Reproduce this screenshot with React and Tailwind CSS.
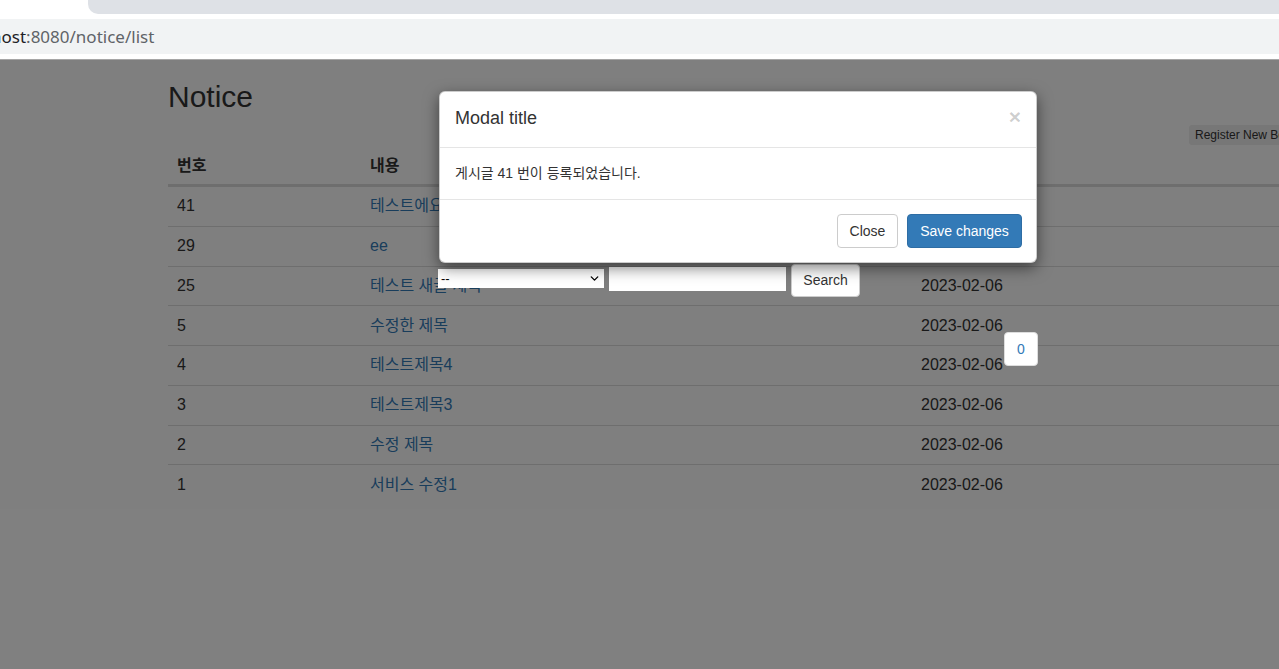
import { ChevronDown } from "lucide-react";

const rows = [
  { no: 41, title: "테스트에요", date: "2023-02-06" },
  { no: 29, title: "ee", date: "2023-02-06" },
  { no: 25, title: "테스트 새글 제목", date: "2023-02-06" },
  { no: 5, title: "수정한 제목", date: "2023-02-06" },
  { no: 4, title: "테스트제목4", date: "2023-02-06" },
  { no: 3, title: "테스트제목3", date: "2023-02-06" },
  { no: 2, title: "수정 제목", date: "2023-02-06" },
  { no: 1, title: "서비스 수정1", date: "2023-02-06" },
];

export default function App() {
  return (
    <div className="w-[1279px] h-[669px] overflow-hidden bg-white font-['Liberation_Sans','Noto_Sans_CJK_KR',sans-serif]">
      {/* browser chrome */}
      <div className="h-[60px] bg-white border-b border-[#a6a6a6]">
        <div className="h-[14px] ml-[88px] bg-[#dee1e6] rounded-bl-[10px]" />
        <div className="mt-[5px] h-[35px] bg-[#f1f3f4] flex items-center overflow-hidden">
          <span className="-ml-[9px] text-[17px] font-['Noto_Sans',sans-serif] text-[#202124] whitespace-nowrap">
            host<span className="text-[#5f6368]">:8080/notice/list</span>
          </span>
        </div>
      </div>

      {/* page */}
      <div className="relative h-[609px] overflow-hidden bg-white text-[16px] text-[#333]">
        <div className="ml-[168px] w-[1170px]">
          <h2 className="mt-[20px] mb-[10px] text-[30px] leading-[33px]">Notice</h2>
          <div className="-mt-[1px] h-[22px] pl-[1021px]">
            <button className="h-[20px] px-[6px] bg-[#eeeeee] rounded-[3px] text-[12px] text-[#333] whitespace-nowrap">
              Register New Board
            </button>
          </div>

          {/* table */}
          <div className="mt-[4px]">
            <div className="flex h-[38px] items-center border-b-2 border-[#ddd] font-bold">
              <div className="w-[194px] pl-[9px]">번호</div>
              <div className="w-[551px] pl-[8px]">내용</div>
              <div className="flex-1 pl-[8px]">등록일</div>
            </div>
            {rows.map((r) => (
              <div key={r.no} className="flex h-[39.75px] items-center border-t border-[#ddd] first:border-t-0">
                <div className="w-[194px] pl-[9px]">{r.no}</div>
                <div className="w-[551px] pl-[8px] text-[#337ab7]">{r.title}</div>
                <div className="flex-1 pl-[8px]">{r.date}</div>
              </div>
            ))}
          </div>
        </div>

        {/* backdrop */}
        <div className="absolute inset-0 z-10 bg-black/50" />

        {/* search controls shown above backdrop */}
        <div className="absolute z-20 left-[438px] top-[204px] flex items-start gap-[5px]">
          <div className="mt-[5px] w-[166px] h-[19px] bg-white flex items-center justify-between px-[3px] text-[13px] text-black">
            <span>--</span>
            <ChevronDown size={13} strokeWidth={2.5} />
          </div>
          <div className="mt-[3px] w-[177px] h-[24px] bg-white" />
          <button className="w-[69px] h-[33px] bg-white border border-[#ccc] rounded-[4px] text-[14px] text-[#333]">
            Search
          </button>
        </div>

        <div className="absolute z-20 left-[1004px] top-[272px] w-[34px] h-[34px] bg-white border border-[#ddd] rounded-[4px] flex items-center justify-center text-[14px] text-[#337ab7]">
          0
        </div>

        {/* modal */}
        <div className="absolute z-30 left-[439px] top-[31px] w-[598px] bg-white rounded-[6px] shadow-[0_5px_15px_rgba(0,0,0,0.5)] border border-black/20">
          <div className="flex items-center justify-between px-[15px] h-[56px] border-b border-[#e5e5e5]">
            <h4 className="-mt-[2px] text-[18px] text-[#333]">Modal title</h4>
            <span className="text-[21px] font-bold text-black/20 leading-none -mt-[6px]">×</span>
          </div>
          <div className="px-[15px] h-[51px] flex items-center text-[14px] text-[#333]">
            게시글 41 번이 등록되었습니다.
          </div>
          <div className="border-t border-[#e5e5e5] px-[14px] h-[63px] flex items-center justify-end gap-[9px]">
            <button className="h-[34px] w-[61px] border border-[#ccc] rounded-[4px] bg-white text-[14px] text-[#333]">
              Close
            </button>
            <button className="h-[34px] w-[115px] border border-[#2e6da4] rounded-[4px] bg-[#337ab7] text-[14px] text-white">
              Save changes
            </button>
          </div>
        </div>
      </div>
    </div>
  );
}
